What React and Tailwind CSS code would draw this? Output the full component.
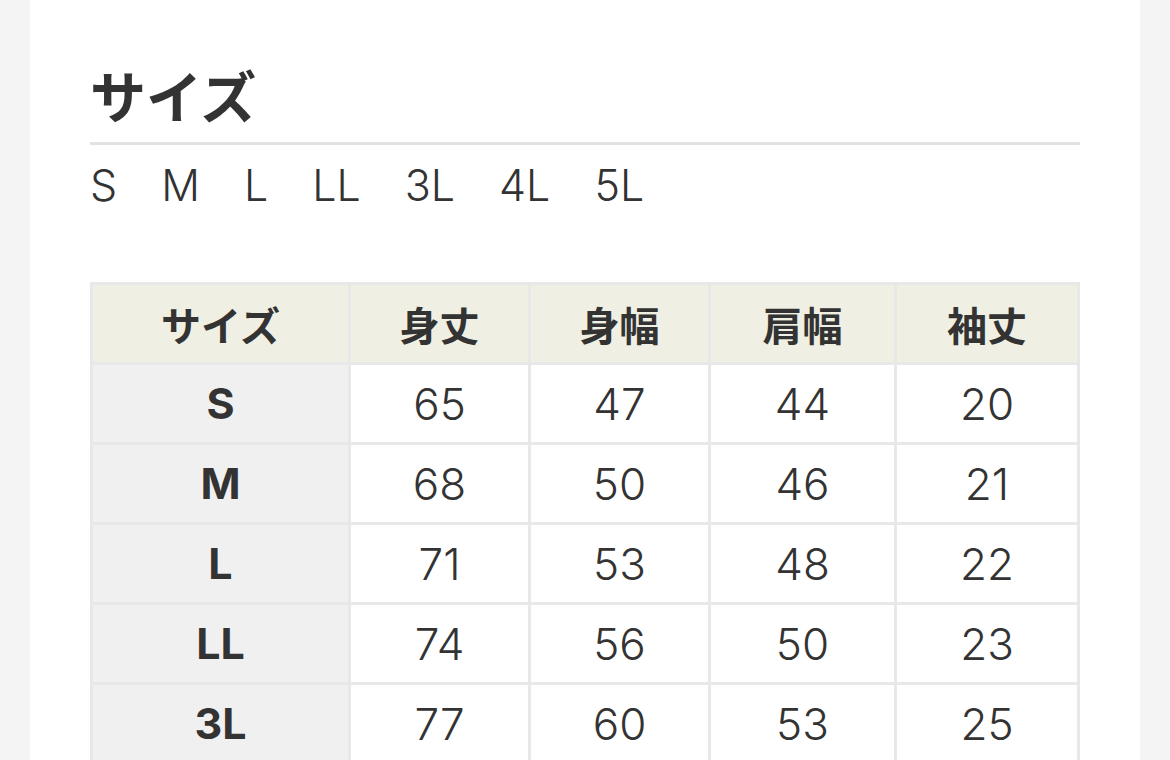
import React from 'react'

const sizes = ['S', 'M', 'L', 'LL', '3L', '4L', '5L'];

const headers = ['サイズ', '身丈', '身幅', '肩幅', '袖丈'];

const rows = [
  ['S', 65, 47, 44, 20],
  ['M', 68, 50, 46, 21],
  ['L', 71, 53, 48, 22],
  ['LL', 74, 56, 50, 23],
  ['3L', 77, 60, 53, 25],
  ['4L', 80, 64, 56, 26],
  ['5L', 83, 68, 59, 27],
];

const App = () => {
  return (
    <div className="min-h-screen bg-[#f4f4f4] font-['Inter','Noto_Sans_CJK_JP',sans-serif] text-[#333]">
      <div className="ml-[30px] w-[1110px] min-h-screen bg-white px-[60px] pt-[66px] pb-16">
        {/* Title */}
        <h2 className="font-['Noto_Sans_CJK_JP',sans-serif] text-[56px] font-bold leading-none pb-[20px] border-b-[3px] border-[#e2e2e2]">
          サイズ
        </h2>

        {/* Size list */}
        <div className="flex gap-[44px] mt-[19px] text-[43px] font-light leading-none">
          {sizes.map((s) => (
            <span key={s}>{s}</span>
          ))}
        </div>

        {/* Size table */}
        <div className="mt-[75px] grid grid-cols-[255px_177px_177px_183px_180px] gap-[3px] p-[3px] bg-[#e8e8e8] w-[990px]">
          {headers.map((h) => (
            <div key={h} className="h-[77px] bg-[#efefe3] flex items-center justify-center font-['Noto_Sans_CJK_JP',sans-serif] text-[40px] font-bold">
              {h}
            </div>
          ))}
          {rows.map((r) => (
            <React.Fragment key={r[0]}>
              <div className="h-[77px] bg-[#f0f0f0] flex items-center justify-center text-[43px] font-bold">
                {r[0]}
              </div>
              {r.slice(1).map((v, i) => (
                <div key={i} className="h-[77px] bg-white flex items-center justify-center text-[44px] font-light">
                  {v}
                </div>
              ))}
            </React.Fragment>
          ))}
        </div>
      </div>
    </div>
  );
}

export default App
